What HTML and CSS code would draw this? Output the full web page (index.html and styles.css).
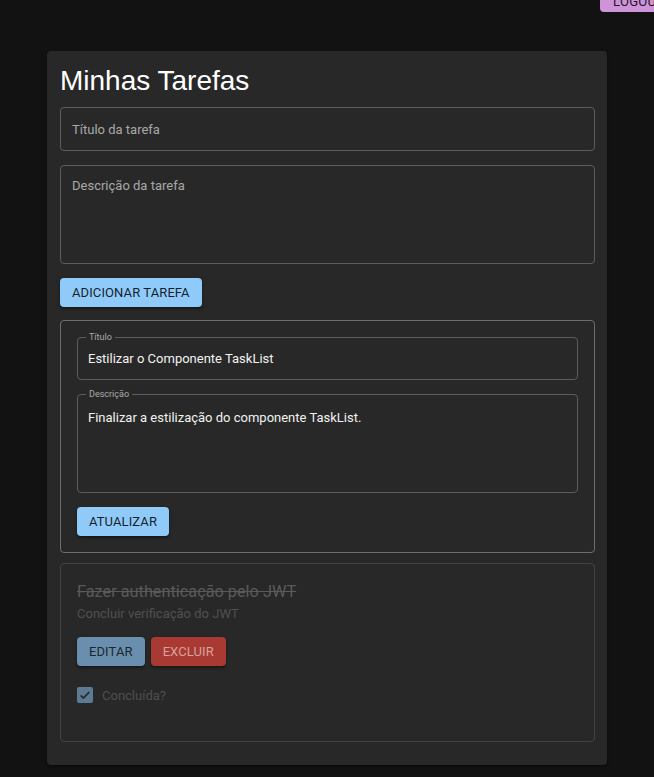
FILE: index.html
```html
<!DOCTYPE html>
<html lang="pt-BR">
<head>
<meta charset="utf-8">
<title>Minhas Tarefas</title>
<link rel="stylesheet" href="styles.css">
</head>
<body>
<button class="logout">Logout</button>
<main class="paper">
  <h1 class="page-title">Minhas Tarefas</h1>
  <form class="new-task">
    <input class="text-input" type="text" placeholder="Título da tarefa">
    <textarea class="text-area" placeholder="Descrição da tarefa"></textarea>
    <div><button type="button" class="btn btn-primary">Adicionar Tarefa</button></div>
  </form>

  <section class="task-card task-edit">
    <div class="field">
      <span class="field-label">Título</span>
      <input class="field-input" type="text" value="Estilizar o Componente TaskList">
    </div>
    <div class="field field-multi">
      <span class="field-label">Descrição</span>
      <div class="field-text">Finalizar a estilização do componente TaskList.</div>
    </div>
    <div><button type="button" class="btn btn-primary">Atualizar</button></div>
  </section>

  <section class="task-card task-done">
    <h2 class="task-title">Fazer authenticação pelo JWT</h2>
    <p class="task-desc">Concluir verificação do JWT</p>
    <div class="task-actions">
      <button type="button" class="btn btn-edit">Editar</button>
      <button type="button" class="btn btn-delete">Excluir</button>
    </div>
    <label class="check-row">
      <span class="check-box">
        <svg viewBox="0 0 24 24" width="16" height="16"><path d="M5.5 12.5l4.2 4.2 8.8-9.2" fill="none" stroke="#282828" stroke-width="2.6"/></svg>
      </span>
      <span class="check-label">Concluída?</span>
    </label>
  </section>
</main>
</body>
</html>
```

FILE: styles.css
```css
* { box-sizing: border-box; }
html, body {
  margin: 0;
  padding: 0;
  background: #121212;
  overflow: hidden;
}
body {
  position: relative;
  min-height: 777px;
  font-family: Roboto, "Liberation Sans", Arial, sans-serif;
  color: #fff;
}
.logout {
  position: absolute;
  top: -17px;
  left: 600px;
  height: 29px;
  padding: 7px 13px 0;
  border: 0;
  border-radius: 4px;
  background: #ce93d8;
  color: rgba(0,0,0,0.87);
  font-family: Roboto, sans-serif;
  font-size: 13px;
  text-transform: uppercase;
  letter-spacing: 0.3px;
}
.paper {
  width: 560px;
  margin: 51px auto 0;
  padding: 14px 12px 23px 13px;
  background: #282828;
  border-radius: 4px;
  box-shadow: 0 2px 4px rgba(0,0,0,0.4);
  display: flex;
  flex-direction: column;
}
.page-title {
  margin: 0;
  font-family: "Liberation Sans", Arial, sans-serif;
  font-weight: 400;
  font-size: 28px;
  line-height: 31px;
  color: #fff;
}
.new-task {
  margin-top: 11px;
  display: flex;
  flex-direction: column;
  gap: 14px;
}
.text-input, .text-area {
  width: 100%;
  border: 1px solid #5c5c5c;
  border-radius: 4px;
  background: transparent;
  color: #fff;
  font-family: Roboto, sans-serif;
  font-size: 13px;
  padding: 0 11px;
  outline: none;
}
.text-input { height: 44px; }
.text-area {
  height: 99px;
  padding-top: 11px;
  line-height: 18px;
  resize: none;
}
.text-input::placeholder, .text-area::placeholder {
  color: rgba(255,255,255,0.6);
  opacity: 1;
}
.btn {
  height: 29px;
  padding: 0 12px;
  border: 0;
  border-radius: 4px;
  font-family: Roboto, sans-serif;
  font-size: 13px;
  font-weight: 400;
  letter-spacing: 0.1px;
  text-transform: uppercase;
  box-shadow: 0 2px 2px rgba(0,0,0,0.3), 0 1px 4px rgba(0,0,0,0.2);
}
.btn-primary {
  background: #90caf9;
  color: rgba(0,0,0,0.87);
}
.task-card {
  border-radius: 4px;
  padding: 16px;
  display: flex;
  flex-direction: column;
}
.task-edit {
  margin-top: 13px;
  border: 1px solid #6e6e6e;
  gap: 14px;
}
.field {
  position: relative;
  border: 1px solid #5c5c5c;
  border-radius: 4px;
  height: 43px;
}
.field-multi { height: 99px; }
.field-label {
  position: absolute;
  top: -6px;
  left: 8px;
  padding: 0 3px;
  background: #282828;
  color: rgba(255,255,255,0.6);
  font-size: 9px;
  line-height: 11px;
}
.field-input {
  width: 100%;
  height: 100%;
  border: 0;
  background: transparent;
  padding: 0 10px;
  color: #f2f2f2;
  font-family: Roboto, sans-serif;
  font-size: 13px;
  outline: none;
}
.field-text {
  padding: 13px 10px 0;
  color: #f2f2f2;
  font-size: 13px;
  line-height: 20px;
}
.task-done {
  margin-top: 10px;
  border: 1px solid #434343;
  min-height: 179px;
}
.task-title {
  margin: 0;
  font-size: 16.3px;
  font-weight: 400;
  line-height: 24px;
  color: #5a5a5a;
  text-decoration: line-through;
}
.task-desc {
  margin: 0;
  font-size: 13px;
  line-height: 20px;
  color: #505050;
}
.task-actions {
  margin-top: 13px;
  display: flex;
  gap: 6px;
}
.btn-edit {
  background: #6a8fae;
  color: #1c2630;
}
.btn-delete {
  background: #a83a33;
  color: #d9a19b;
}
.check-row {
  margin-top: 21px;
  display: flex;
  align-items: center;
  gap: 9px;
}
.check-box {
  width: 16px;
  height: 16px;
  border-radius: 2px;
  background: #5b7a93;
  display: flex;
}
.check-label {
  font-size: 13px;
  color: #4e4e4e;
}
```
